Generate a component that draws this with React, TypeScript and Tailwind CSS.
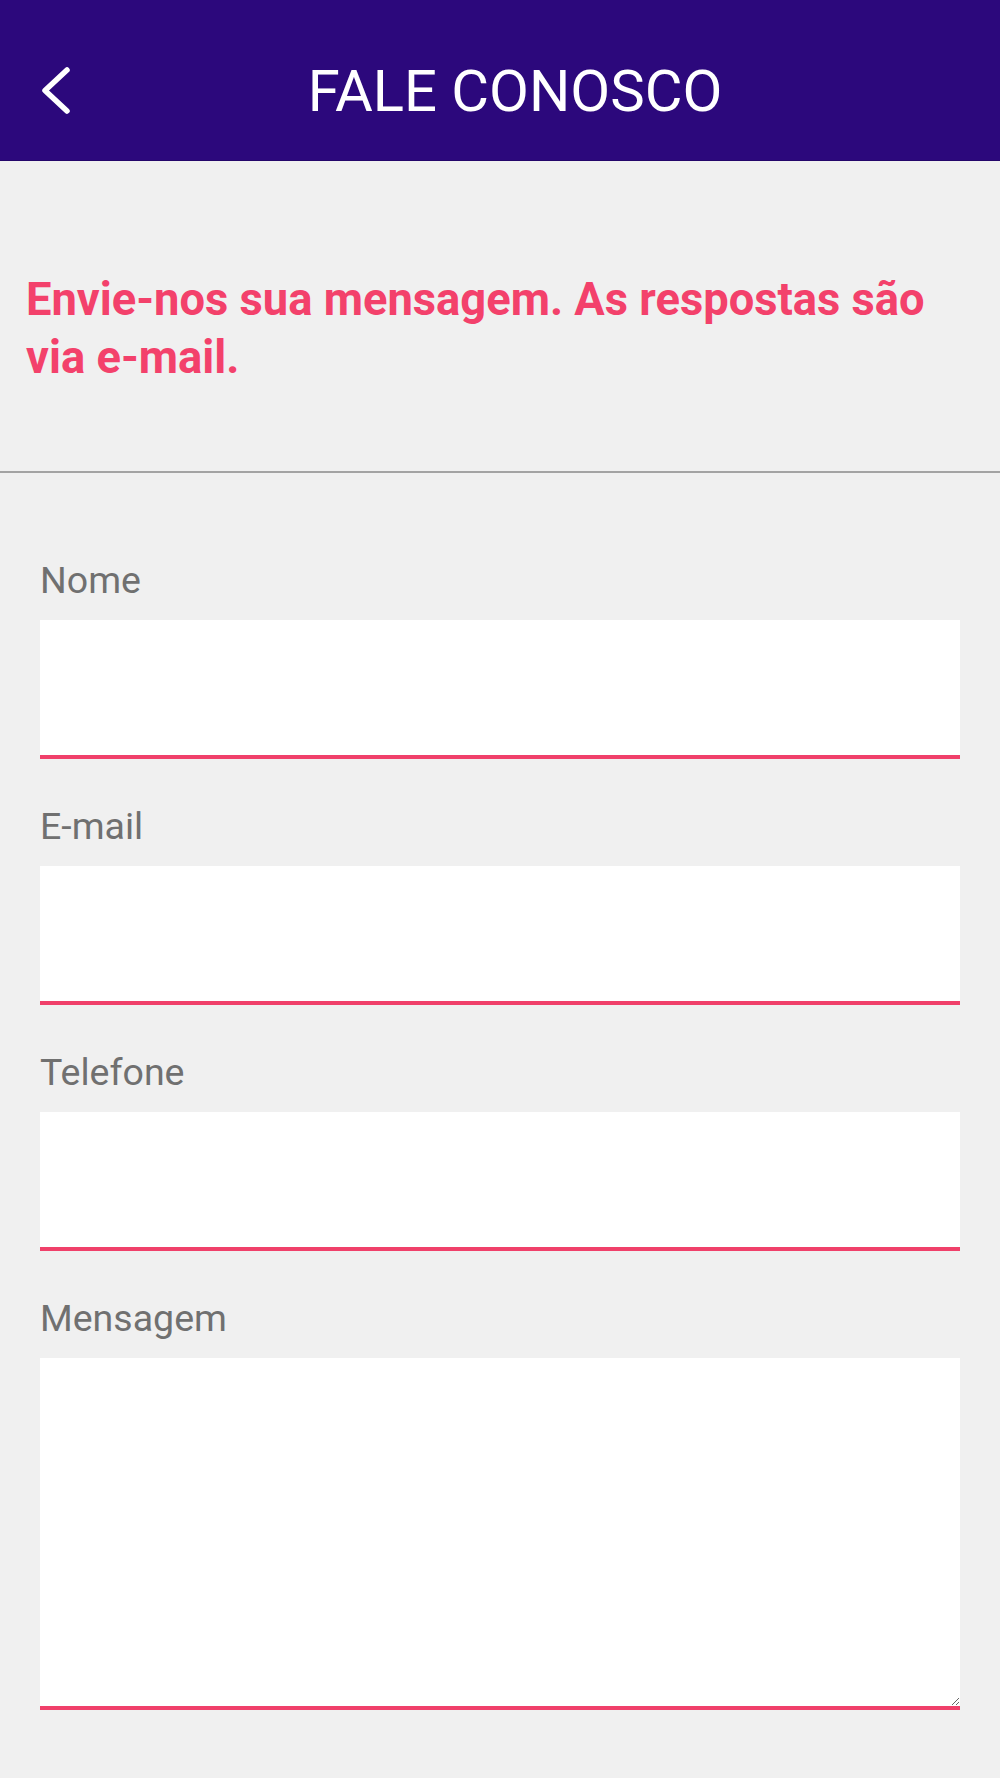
import React from "react";

const fields = ["Nome", "E-mail", "Telefone"];

export default function App() {
  return (
    <div
      className="min-h-[1778px] w-[1000px] bg-[#f0f0f0]"
      style={{ fontFamily: "Roboto, 'Noto Sans', sans-serif" }}
    >
      <header className="flex h-[161px] items-start border-b border-[#24066a] bg-[#2c087c] pl-[40px] pr-[44px]">
        <button className="mt-[65px] shrink-0" aria-label="Voltar">
          <svg width="34" height="52" viewBox="0 0 34 52" fill="none">
            <polyline
              points="27,5 5,25.5 27,46"
              stroke="#ffffff"
              strokeWidth="5.5"
              strokeLinecap="round"
              strokeLinejoin="round"
            />
          </svg>
        </button>
        <h1 className="mt-[57px] flex-1 text-center text-[58px] font-normal leading-[68px] text-white">
          FALE CONOSCO
        </h1>
      </header>

      <div className="px-[26px] pt-[110px] pb-[85px]">
        <p className="text-[45.3px] font-bold leading-[57.5px] text-[#f3416b]">
          Envie-nos sua mensagem. As respostas são via e-mail.
        </p>
      </div>

      <div className="h-[2px] bg-[#a3a3a3]" />

      <form className="flex flex-col px-[40px] pt-[85px]">
        {fields.map((f) => (
          <div key={f} className="mb-[45px] flex flex-col">
            <label className="text-[37.5px] leading-[44px] text-[#707070]">{f}</label>
            <input
              type="text"
              className="mt-[18px] block h-[139px] w-full border-b-4 border-[#f0406a] bg-white px-3 text-[32px] outline-none"
            />
          </div>
        ))}
        <div className="flex flex-col">
          <label className="text-[37.5px] leading-[44px] text-[#707070]">Mensagem</label>
          <textarea className="mt-[18px] block h-[352px] w-full resize border-b-4 border-[#f0406a] bg-white p-3 text-[32px] outline-none" />
        </div>
      </form>
    </div>
  );
}
